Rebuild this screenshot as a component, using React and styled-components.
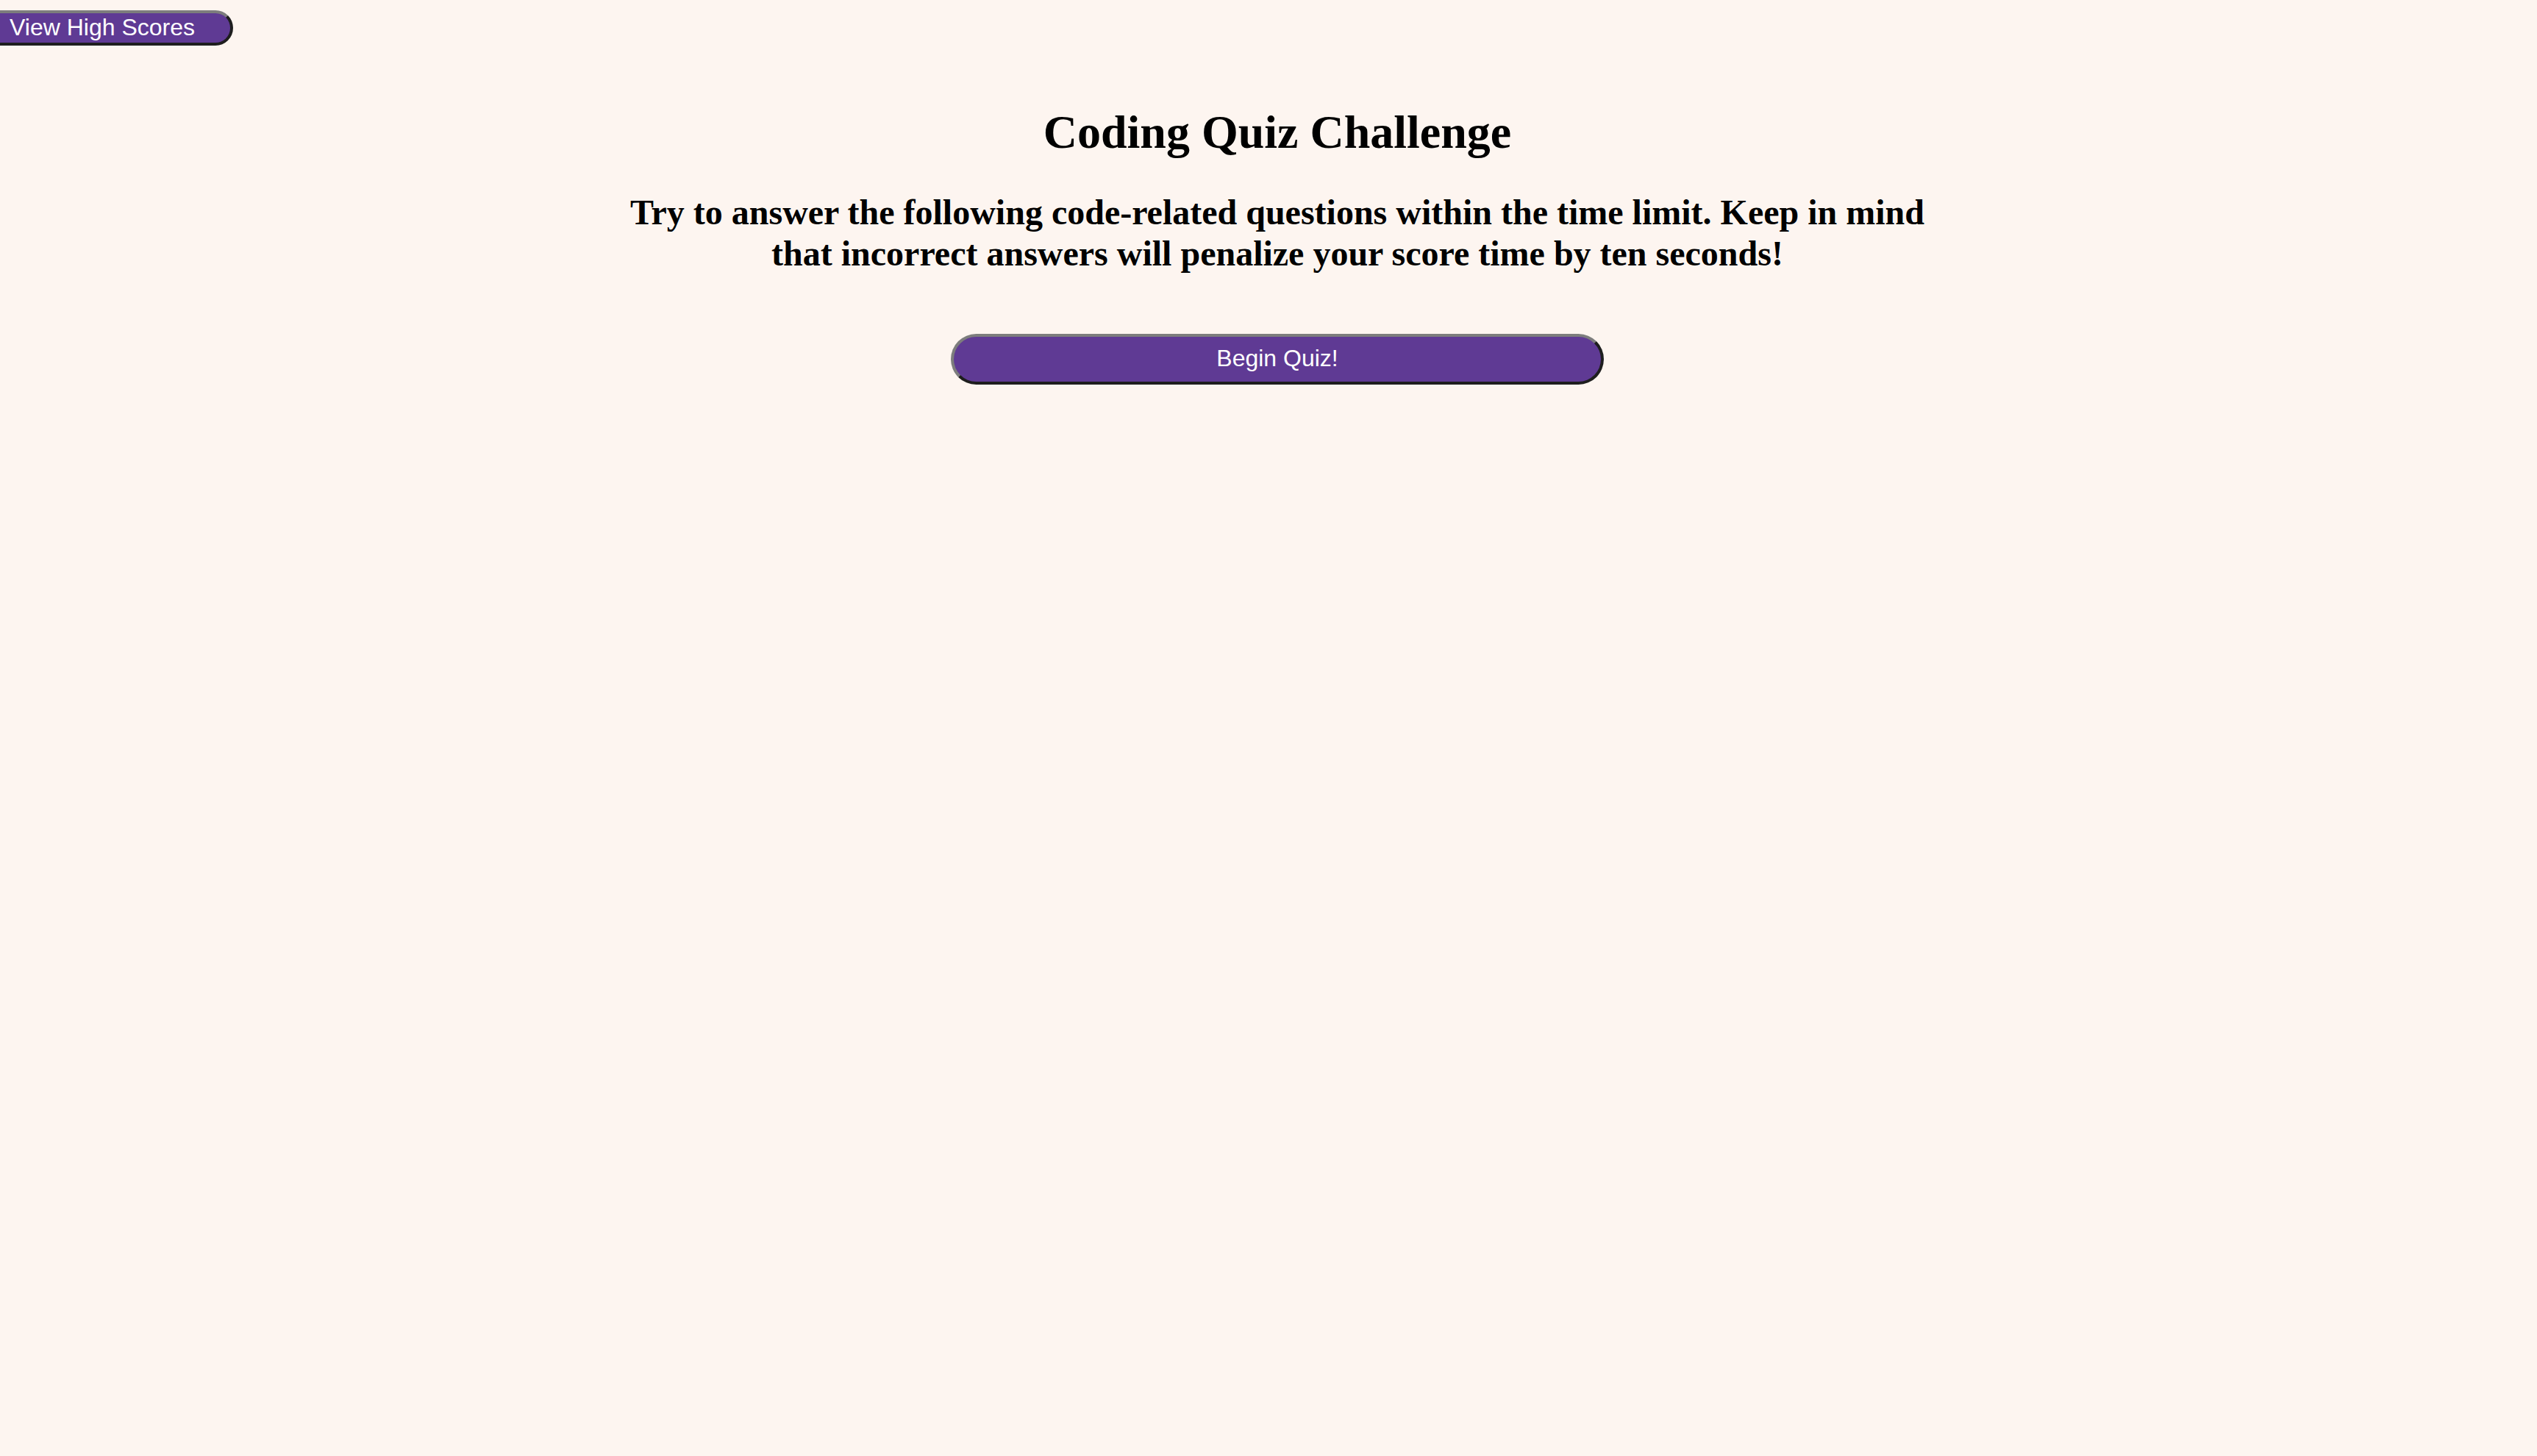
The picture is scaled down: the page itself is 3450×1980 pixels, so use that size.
import React from "react";
import styled, { createGlobalStyle } from "styled-components";

const GlobalStyle = createGlobalStyle`
  html, body {
    margin: 0;
    padding: 0;
    background: #fdf5f0;
  }
  body {
    font-family: "Liberation Serif", "Times New Roman", serif;
    color: #000;
  }
`;

const Page = styled.div`
  min-height: 1980px;
  background: #fdf5f0;
  overflow: hidden;
`;

const Header = styled.header`
  display: flex;
  padding-top: 14px;
`;

const PillButton = styled.button`
  box-sizing: border-box;
  background: #5f3a94;
  color: #ffffff;
  font-family: "Liberation Sans", Arial, sans-serif;
  font-size: 32px;
  line-height: 1;
  border-style: solid;
  border-width: 4px;
  border-top-color: #7d7d7d;
  border-left-color: #7d7d7d;
  border-right-color: #1e1e1e;
  border-bottom-color: #1e1e1e;
  border-radius: 40px;
  cursor: pointer;
  display: flex;
  align-items: center;
  justify-content: center;
  padding: 0 ${(p) => p.$padX}px 3px;
  height: ${(p) => p.$h}px;
  width: ${(p) => (p.$w ? `${p.$w}px` : "auto")};
  margin-left: ${(p) => p.$ml || 0}px;
`;

const Main = styled.main`
  display: flex;
  flex-direction: column;
  align-items: center;
  text-align: center;
  padding-left: 24px;
`;

const Title = styled.h1`
  margin: 81px 0 0;
  font-size: 64px;
  line-height: 74px;
  font-weight: 700;
`;

const Intro = styled.p`
  margin: 44px 0 0;
  max-width: 1790px;
  font-size: 48px;
  line-height: 56px;
  font-weight: 700;
`;

const StartRow = styled.div`
  margin-top: 81px;
  display: flex;
  justify-content: center;
`;

export default function App() {
  return (
    <Page>
      <GlobalStyle />
      <Header>
        <PillButton $padX={48} $h={48} $ml={-39}>
          View High Scores
        </PillButton>
      </Header>
      <Main>
        <Title>Coding Quiz Challenge</Title>
        <Intro>
          Try to answer the following code-related questions within the time
          limit. Keep in mind that incorrect answers will penalize your score
          time by ten seconds!
        </Intro>
        <StartRow>
          <PillButton $padX={0} $h={69} $w={888}>
            Begin Quiz!
          </PillButton>
        </StartRow>
      </Main>
    </Page>
  );
}
